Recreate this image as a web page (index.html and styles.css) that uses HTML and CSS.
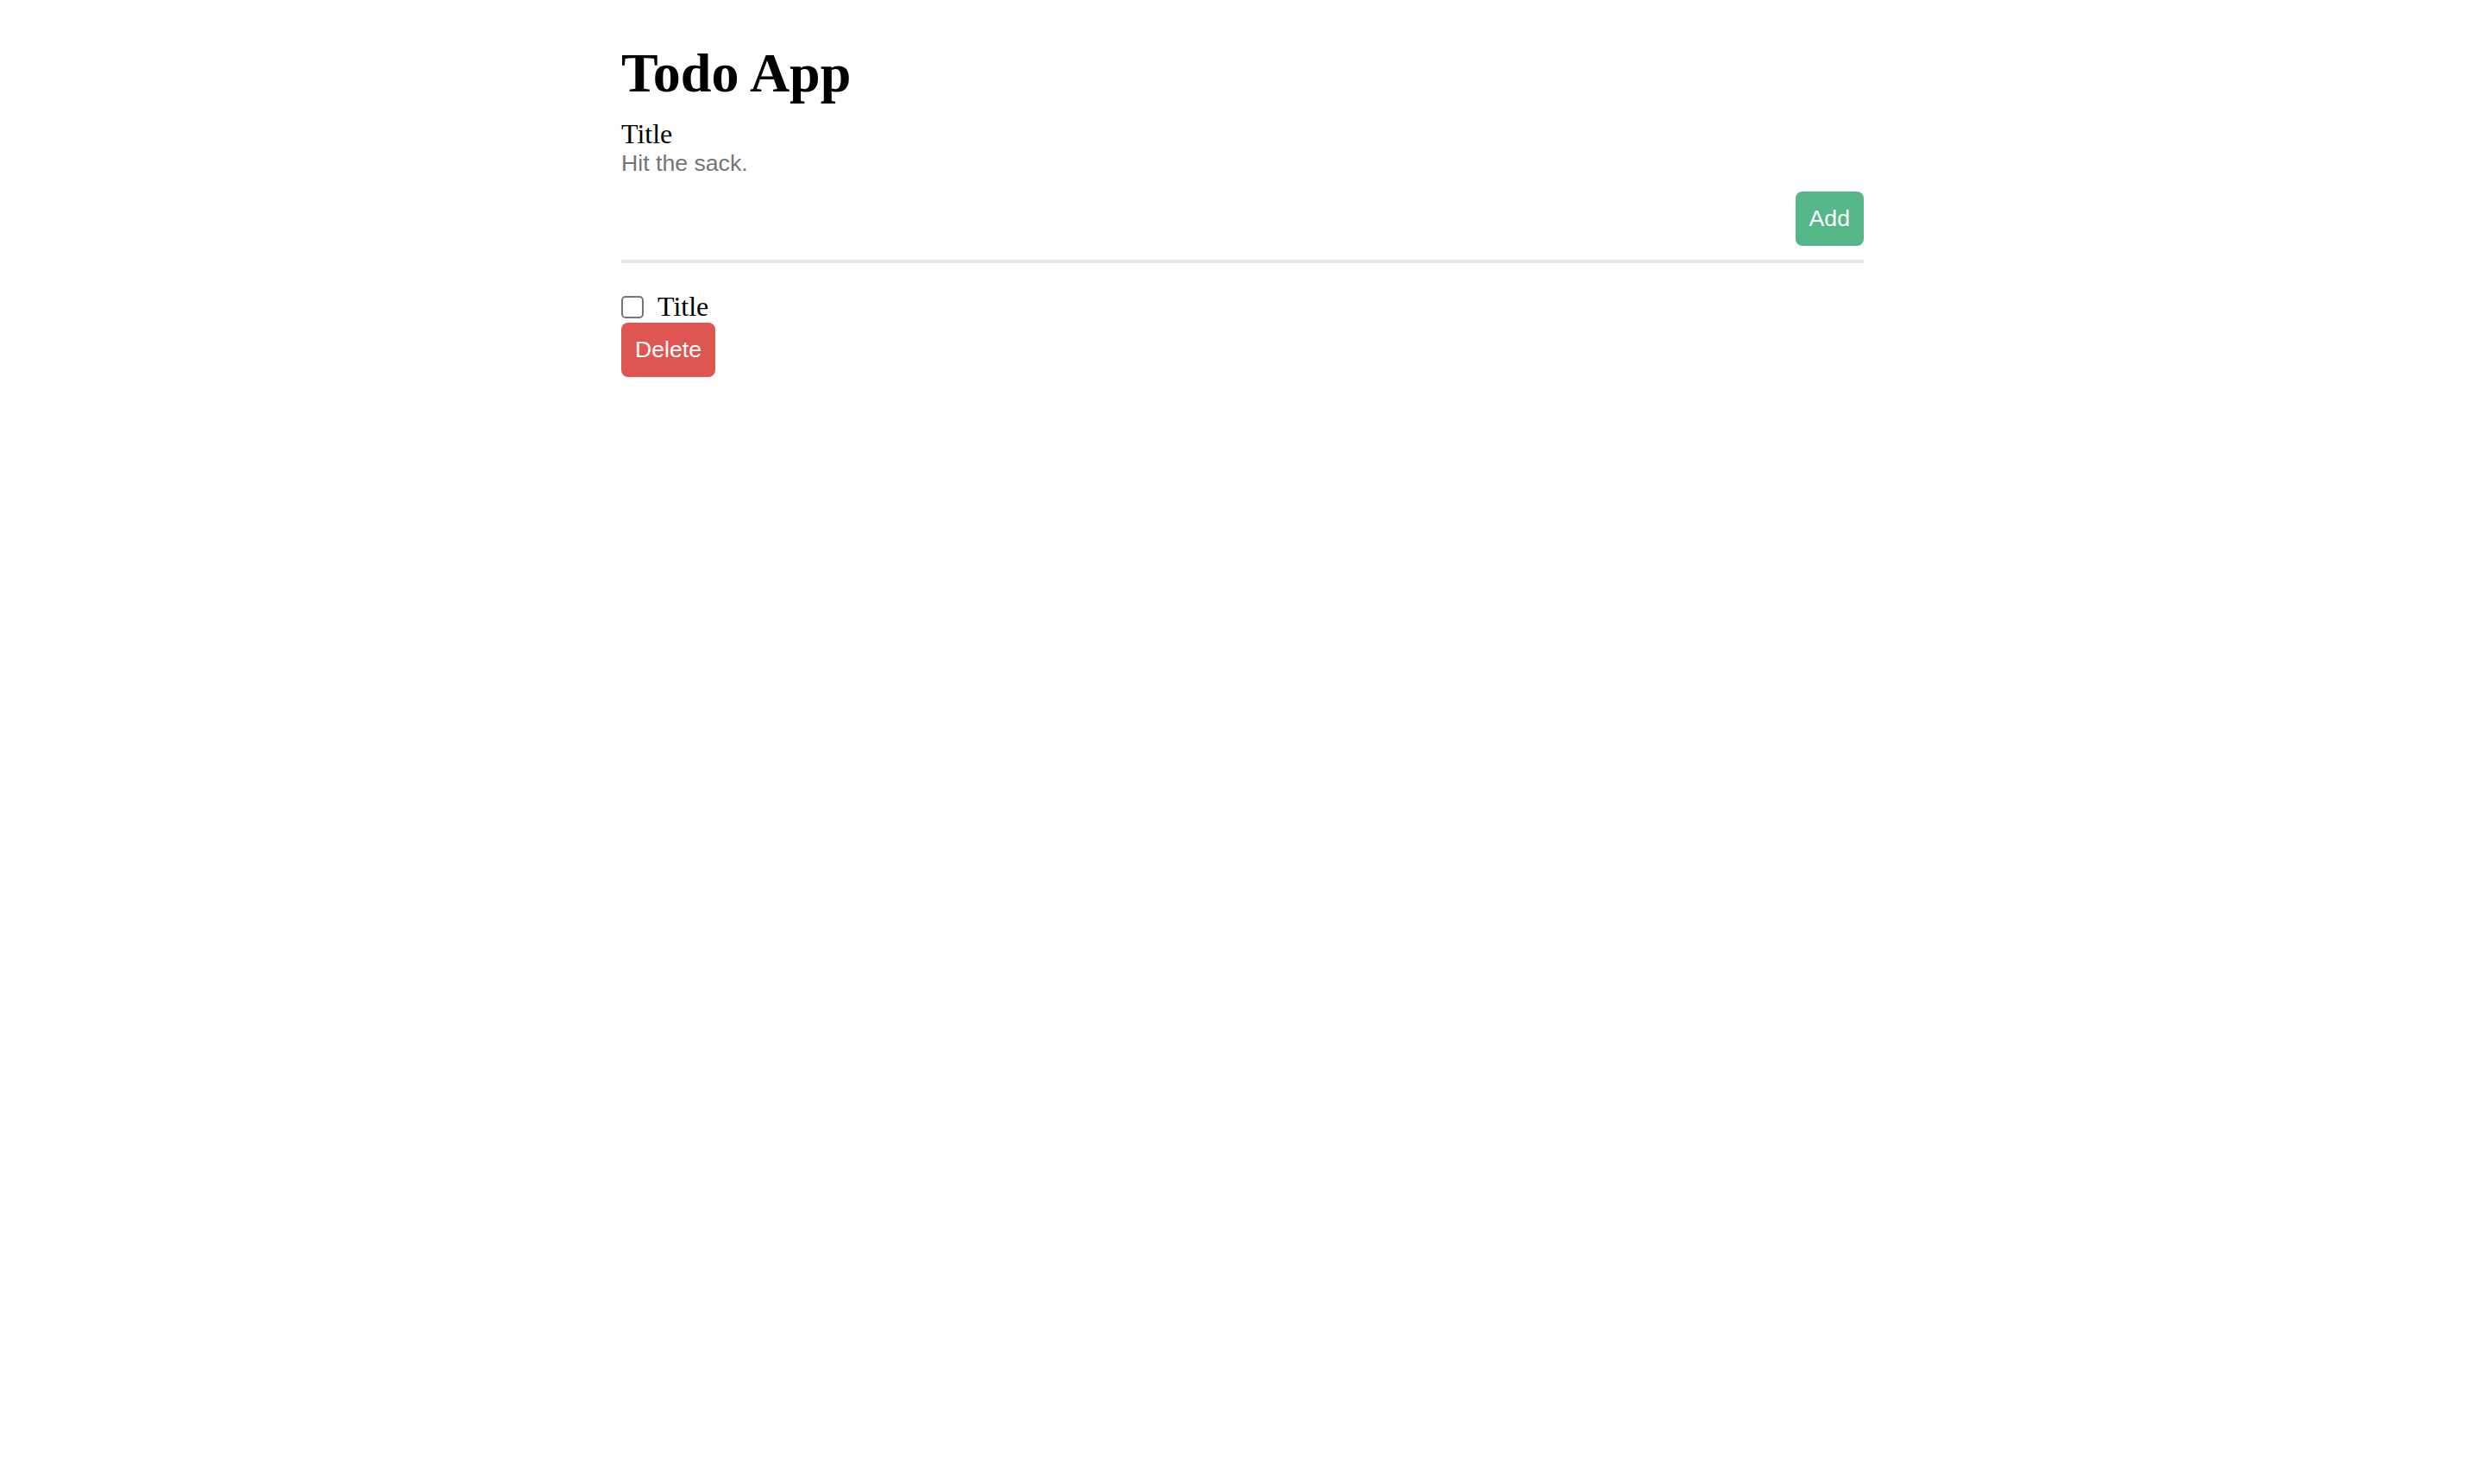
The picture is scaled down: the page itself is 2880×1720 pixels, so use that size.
FILE: index.html
```html
<!DOCTYPE html>
<html lang="en">
<head>
<meta charset="utf-8">
<title>Todo App</title>
<link rel="stylesheet" href="styles.css">
</head>
<body>
<main class="app">
  <h1 class="app-title">Todo App</h1>
  <form class="todo-form">
    <label class="field-label" for="title">Title</label>
    <input class="field-input" id="title" type="text" placeholder="Hit the sack.">
    <button class="btn btn-add" type="button">Add</button>
  </form>
  <ul class="todo-list">
    <li class="todo-item">
      <label class="todo-row">
        <input class="todo-check" type="checkbox">
        <span class="todo-text">Title</span>
      </label>
      <button class="btn btn-delete" type="button">Delete</button>
    </li>
  </ul>
</main>
</body>
</html>
```

FILE: styles.css
```css
html, body {
  margin: 0;
  padding: 0;
  background: #ffffff;
}

body {
  font-family: "Liberation Serif", "Times New Roman", serif;
  color: #000000;
}

.app {
  width: 1440px;
  margin: 0 auto;
  padding-top: 48px;
}

.app-title {
  margin: 0;
  font-size: 64px;
  font-weight: bold;
  line-height: normal;
}

.todo-form {
  display: flex;
  flex-direction: column;
  margin-top: 15px;
  padding-bottom: 16px;
  border-bottom: 4px solid #e5e7eb;
}

.field-label {
  font-size: 32px;
  line-height: normal;
}

.field-input {
  border: none;
  outline: none;
  padding: 0;
  margin: 0;
  font-family: "Liberation Sans", Arial, sans-serif;
  font-size: 26.67px;
  line-height: normal;
  color: #000;
  background: transparent;
}

.field-input::placeholder {
  color: #757575;
}

.btn {
  border: none;
  border-radius: 8px;
  padding: 16px;
  font-family: "Liberation Sans", Arial, sans-serif;
  font-size: 26.67px;
  line-height: normal;
  color: #ffffff;
  cursor: pointer;
}

.btn-add {
  align-self: flex-end;
  margin-top: 17px;
  background: #55b687;
}

.btn-delete {
  background: #df5551;
}

.todo-list {
  list-style: none;
  margin: 32px 0 0;
  padding: 0;
}

.todo-item {
  display: flex;
  flex-direction: column;
  align-items: flex-start;
}

.todo-row {
  display: flex;
  align-items: center;
  gap: 16px;
  font-size: 32px;
  line-height: normal;
}

.todo-check {
  appearance: none;
  -webkit-appearance: none;
  width: 26px;
  height: 26px;
  margin: 1px 0 0 0;
  border: 2px solid #767676;
  border-radius: 5px;
  background: #fff;
  box-sizing: border-box;
}
```
